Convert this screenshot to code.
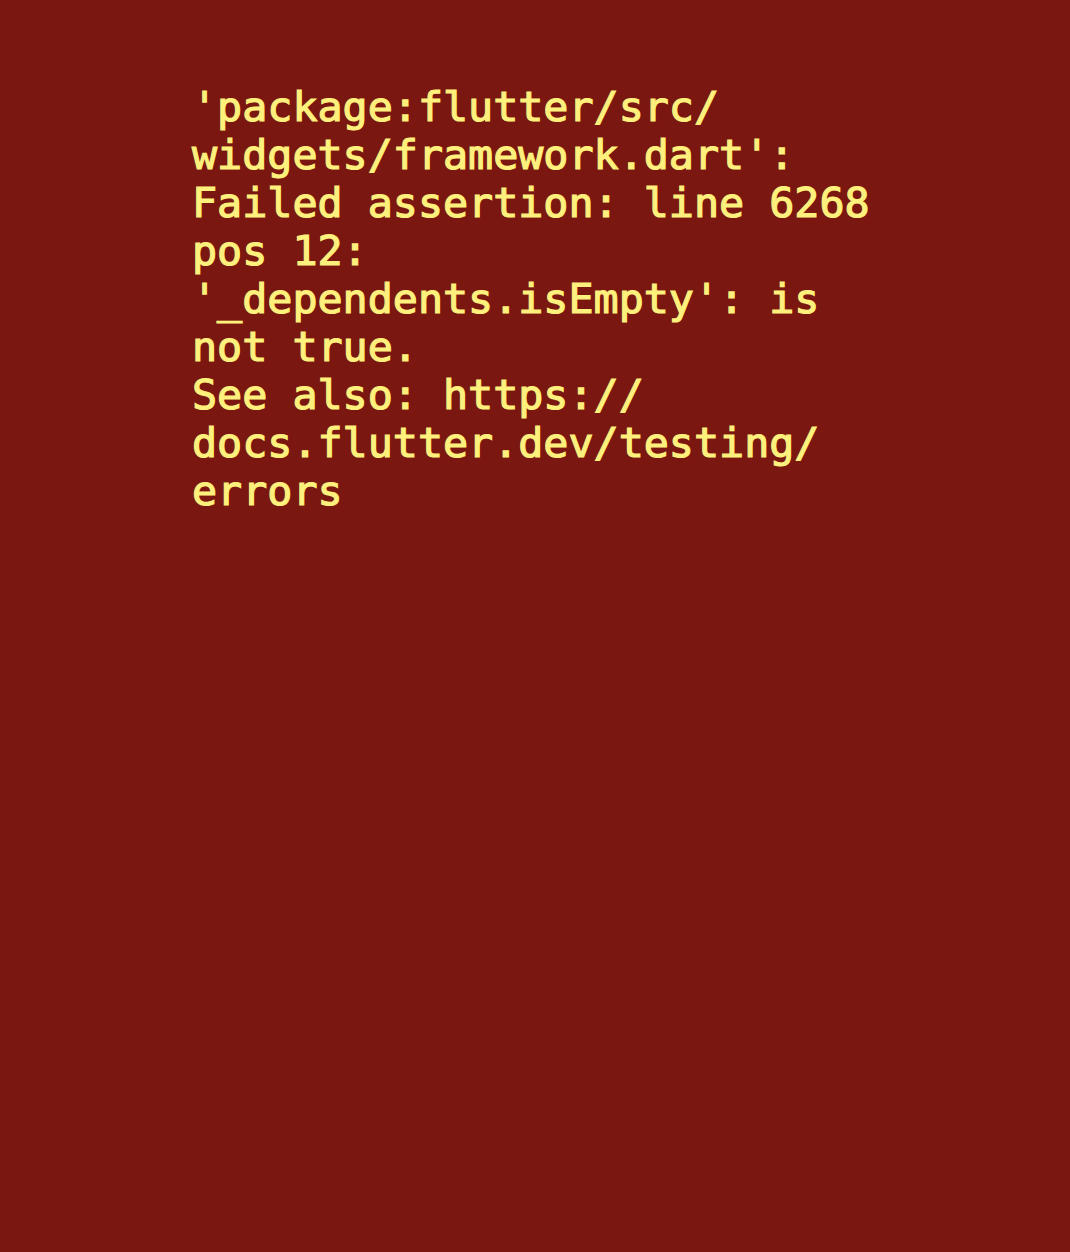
export default function App() {
  const lines = [
    "'package:flutter/src/",
    "widgets/framework.dart':",
    "Failed assertion: line 6268",
    "pos 12:",
    "'_dependents.isEmpty': is",
    "not true.",
    "See also: https://",
    "docs.flutter.dev/testing/",
    "errors",
  ];

  return (
    <div className="min-h-[1252px] w-full bg-[#7b1711] px-[192px] pt-[83px]">
      <div className="font-['DejaVu_Sans_Mono',monospace] text-[41.7px] font-normal leading-[48px] text-[#fdf07c] [-webkit-text-stroke:1.2px_#fdf07c] whitespace-pre">
        {lines.map((l, i) => (
          <div key={i}>{l}</div>
        ))}
      </div>
    </div>
  );
}
